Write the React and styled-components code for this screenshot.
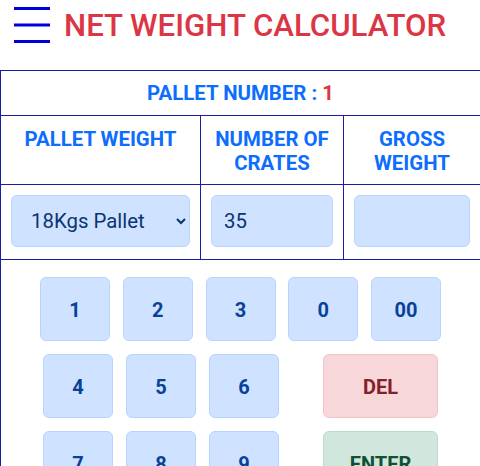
import React, { useState } from "react";
import styled, { createGlobalStyle } from "styled-components";

const GlobalStyle = createGlobalStyle`
  body {
    margin: 0;
    background: #fff;
    font-family: Roboto, "Liberation Sans", Arial, sans-serif;
    overflow-x: hidden;
  }
`;

const Header = styled.header`
  display: flex;
  align-items: center;
  gap: 14px;
  height: 50px;
  padding-left: 14px;
  margin-bottom: 20px;
`;

const MenuButton = styled.button`
  display: flex;
  padding: 0;
  border: 0;
  background: none;
  cursor: pointer;
`;

const Title = styled.h1`
  margin: 0;
  font-size: 31.2px;
  font-weight: 500;
  color: #dc3545;
`;

const Table = styled.div`
  display: grid;
  grid-template-columns: 200px 143px 1fr;
  border-left: 1px solid #1c1ca3;
  border-top: 1px solid #1c1ca3;
`;

const Cell = styled.div`
  padding: ${(p) => p.$pad || "10px"};
  border-bottom: 1px solid #1c1ca3;
  border-right: ${(p) => (p.$last ? "none" : "1px solid #1c1ca3")};
  grid-column: ${(p) => (p.$span ? "1 / -1" : "auto")};
  text-align: center;
  font-size: 20.4px;
  font-weight: 700;
  line-height: 24px;
  color: #0d6efd;
`;

const Red = styled.span`
  color: #dc3545;
`;

const fieldCss = `
  box-sizing: border-box;
  width: 100%;
  height: 52px;
  border: 1px solid #b6d4fe;
  border-radius: 6px;
  background: #cfe2ff;
  color: #0b3470;
  font-family: Roboto, "Liberation Sans", Arial, sans-serif;
  font-size: 20.4px;
  outline: none;
`;

const Select = styled.select`
  ${fieldCss}
  padding: 0 8px 0 15px;
`;

const Input = styled.input`
  ${fieldCss}
  padding: 0 12px;
`;

const Keypad = styled.div`
  display: flex;
  flex-direction: column;
  gap: 13px;
  padding-top: 17px;
  border-left: 1px solid #1c1ca3;
`;

const KeyRow = styled.div`
  display: flex;
  justify-content: center;
  gap: ${(p) => p.$gap || "12.75px"};
`;

const KeyGroup = styled.div`
  display: flex;
  flex-direction: column;
  gap: 13px;
`;

const Keys = styled.div`
  display: flex;
  gap: 13px;
`;

const palette = {
  primary: ["#cfe2ff", "#b6d4fe", "#084298"],
  danger: ["#f8d7da", "#f5c2c7", "#842029"],
  success: ["#d1e7dd", "#badbcc", "#0f5132"],
};

const Key = styled.button`
  box-sizing: border-box;
  width: ${(p) => (p.$wide ? "115px" : "70px")};
  height: 64px;
  border-radius: 6px;
  border: 1px solid ${(p) => palette[p.$tone || "primary"][1]};
  background: ${(p) => palette[p.$tone || "primary"][0]};
  color: ${(p) => palette[p.$tone || "primary"][2]};
  font-family: Roboto, "Liberation Sans", Arial, sans-serif;
  font-size: 20px;
  font-weight: 700;
  cursor: pointer;
  padding: 2px 0 0;
`;

const Hamburger = () => (
  <svg width="36" height="36" viewBox="0 0 36 36">
    <rect x="0" y="0" width="36" height="3" fill="#0000dd" />
    <rect x="0" y="16.5" width="36" height="3" fill="#0000dd" />
    <rect x="0" y="33" width="36" height="3" fill="#0000dd" />
  </svg>
);

export default function App() {
  const [crates, setCrates] = useState("35");
  const [gross, setGross] = useState("");

  return (
    <>
      <GlobalStyle />
      <Header>
        <MenuButton aria-label="menu">
          <Hamburger />
        </MenuButton>
        <Title>NET WEIGHT CALCULATOR</Title>
      </Header>
      <Table>
        <Cell $span $last>
          PALLET NUMBER : <Red>1</Red>
        </Cell>
        <Cell $pad="11px 10px 9px">PALLET WEIGHT</Cell>
        <Cell $pad="11px 10px 9px">NUMBER OF CRATES</Cell>
        <Cell $pad="11px 10px 9px" $last>GROSS WEIGHT</Cell>
        <Cell $pad="10px 10px 12px">
          <Select defaultValue="18">
            <option value="18">18Kgs Pallet</option>
            <option value="20">20Kgs Pallet</option>
          </Select>
        </Cell>
        <Cell $pad="10px 10px 12px">
          <Input value={crates} onChange={(e) => setCrates(e.target.value)} />
        </Cell>
        <Cell $pad="10px 10px 12px" $last>
          <Input value={gross} onChange={(e) => setGross(e.target.value)} />
        </Cell>
      </Table>
      <Keypad>
        <KeyRow>
          {["1", "2", "3", "0", "00"].map((k) => (
            <Key key={k}>{k}</Key>
          ))}
        </KeyRow>
        <KeyRow $gap="44px">
          <KeyGroup>
            <Keys>
              <Key>4</Key>
              <Key>5</Key>
              <Key>6</Key>
            </Keys>
            <Keys>
              <Key>7</Key>
              <Key>8</Key>
              <Key>9</Key>
            </Keys>
          </KeyGroup>
          <KeyGroup>
            <Key $wide $tone="danger">DEL</Key>
            <Key $wide $tone="success">ENTER</Key>
          </KeyGroup>
        </KeyRow>
      </Keypad>
    </>
  );
}
